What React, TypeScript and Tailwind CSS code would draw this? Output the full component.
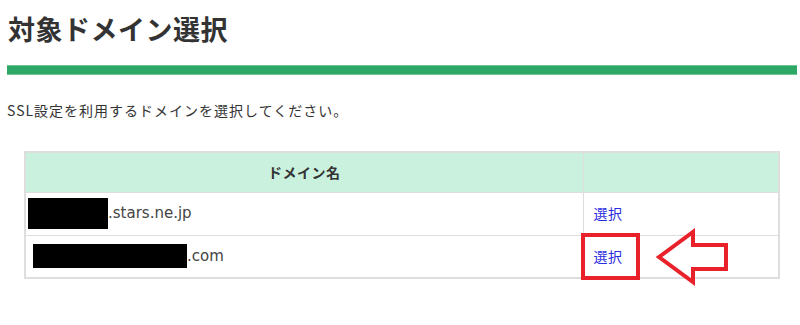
export default function App() {
  const font = { fontFamily: '"Noto Sans CJK JP", "Noto Sans", sans-serif' }
  const latin = { fontFamily: '"DejaVu Sans", "Noto Sans CJK JP", sans-serif' }

  return (
    <div className="relative w-[800px] h-[325px] bg-white text-[#333] overflow-hidden" style={font}>
      <h1 className="pl-[8px] pt-[10px] text-[27px] leading-[37px] font-bold tracking-[0.5px] text-[#333]">対象ドメイン選択</h1>

      <div className="ml-[7px] mr-[3px] mt-[18px] h-[10px] bg-[#2ea866] border-t border-b border-[#6cc494]"></div>

      <p className="pl-[7px] mt-[25px] text-[14px] leading-[20px] tracking-[1px] text-[#333]">
        SSL設定を利用するドメインを選択してください。
      </p>

      <table className="ml-[24px] mt-[31px] w-[756px] border-collapse border-2 border-[#dedede]">
        <thead>
          <tr className="bg-[#caf1dd] h-[40px]">
            <th className="w-[558px] border border-[#dedede] text-[14px] font-bold text-center tracking-[0.5px] text-[#333]">ドメイン名</th>
            <th className="border border-[#dedede]"></th>
          </tr>
        </thead>
        <tbody>
          <tr className="h-[43px]">
            <td className="border border-[#dedede] pl-[2px] text-[15px] text-[#444]">
              <div className="flex items-center">
                <span className="inline-block w-[80px] h-[31px] bg-black"></span>
                <span style={latin}>.stars.ne.jp</span>
              </div>
            </td>
            <td className="border border-[#dedede] pl-[10px] text-[14px]">
              <a className="text-[#2d2de0] tracking-[0.5px]">選択</a>
            </td>
          </tr>
          <tr className="h-[43px]">
            <td className="border border-[#dedede] pl-[7px] text-[15px] text-[#444]">
              <div className="flex items-center">
                <span className="inline-block w-[154px] h-[24px] bg-black"></span>
                <span style={latin}>.com</span>
              </div>
            </td>
            <td className="border border-[#dedede] pl-[10px] text-[14px]">
              <a className="text-[#2d2de0] tracking-[0.5px]">選択</a>
            </td>
          </tr>
        </tbody>
      </table>

      {/* highlight box */}
      <div className="absolute left-[581px] top-[233px] w-[59px] h-[47px] border-[4px] border-[#e8212b]"></div>

      {/* arrow */}
      <svg className="absolute left-[650px] top-[226px]" width="86" height="64" viewBox="650 226 86 64">
        <polygon
          points="659,257 693,232 693,245 726,245 726,269 693,269 693,282"
          fill="white"
          stroke="#e8212b"
          strokeWidth="4"
          strokeLinejoin="miter"
        />
      </svg>
    </div>
  )
}
